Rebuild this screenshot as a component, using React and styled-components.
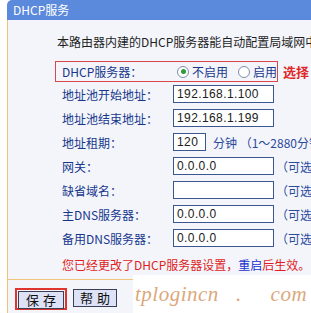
import React from 'react'
import styled, { createGlobalStyle } from 'styled-components'

const GlobalStyle = createGlobalStyle`
  body {
    margin: 0;
    background: #ffffff;
    font-family: "Noto Sans CJK SC", "Liberation Sans", sans-serif;
    font-size: 12px;
  }
`

const Page = styled.div`
  position: relative;
  width: 311px;
  height: 313px;
  overflow: hidden;
  background: #ffffff;
`

const Header = styled.div`
  margin-left: 7px;
  height: 20px;
  line-height: 20px;
  padding-left: 6px;
  background: #5b89dc;
  border-top-left-radius: 5px;
  color: #ffffff;
  font-size: 12px;
  white-space: nowrap;
`

const Panel = styled.div`
  margin-left: 7px;
  height: 293px;
  border-left: 1px solid #f0c47a;
  background: #f3f5fb;
  overflow: hidden;
`

const Intro = styled.div`
  margin-top: 14px;
  padding-left: 49px;
  line-height: 16px;
  color: #1e1e1e;
  white-space: nowrap;
`

const Form = styled.div`
  margin-left: 47px;
  margin-top: 11px;
`

const SwitchLine = styled.div`
  display: flex;
  align-items: center;
  white-space: nowrap;
`

const SwitchBox = styled.div`
  display: flex;
  align-items: center;
  width: 215px;
  height: 19px;
  padding-left: 6px;
  border: 1px solid #d9474a;
`

const Label = styled.div`
  width: 111px;
  flex: none;
  color: #17378c;
  white-space: nowrap;
`

const Radio = styled.div`
  display: flex;
  align-items: center;
  margin-left: ${(p) => p.$gap}px;
  color: #17378c;
`

const Circle = styled.span`
  position: relative;
  width: 10px;
  height: 10px;
  margin-right: 3px;
  border: 1px solid #7f8ca6;
  border-radius: 50%;
  background: #ffffff;

  &::after {
    content: '';
    display: ${(p) => (p.$on ? 'block' : 'none')};
    position: absolute;
    left: 2.5px;
    top: 2.5px;
    width: 5px;
    height: 5px;
    border-radius: 50%;
    background: #2f9a3a;
  }
`

const Hint = styled.span`
  margin-left: 5px;
  color: #e02828;
  font-size: 13px;
  font-weight: bold;
`

const FieldRow = styled.div`
  display: flex;
  align-items: center;
  height: 24px;
  padding-left: 7px;
  white-space: nowrap;
  &:first-of-type {
    margin-top: 3px;
  }
`

const Field = styled.div`
  box-sizing: border-box;
  width: ${(p) => p.$w}px;
  height: 18px;
  flex: none;
  padding-left: 3px;
  line-height: 16px;
  border: 1px solid #3c5690;
  background: #ffffff;
  color: #202020;
  font-family: "Liberation Sans", sans-serif;
  font-size: 12px;
  letter-spacing: 0.4px;
`

const Note = styled.span`
  margin-left: ${(p) => p.$gap}px;
  color: #2a4a9c;
`

const Message = styled.div`
  margin-top: 7px;
  padding-left: 7px;
  line-height: 16px;
  color: #e01e1e;
  white-space: nowrap;
`

const Link = styled.span`
  color: #1830d0;
`

const Divider = styled.div`
  margin-top: 6px;
  border-top: 1px solid #f0c47a;
`

const Buttons = styled.div`
  display: flex;
  align-items: flex-start;
  gap: 6px;
  padding: 8px 0 0 7px;
`

const Button = styled.div`
  box-sizing: border-box;
  width: ${(p) => (p.$focus ? 52 : 44)}px;
  height: ${(p) => (p.$focus ? 22 : 19)}px;
  margin-top: ${(p) => (p.$focus ? 0 : 1)}px;
  border: ${(p) => (p.$focus ? '2px solid #e0352c' : 'none')};
  padding: ${(p) => (p.$focus ? '1px' : '0')};
`

const Face = styled.div`
  box-sizing: border-box;
  height: 18px;
  line-height: 16px;
  text-align: center;
  border: 1px solid #3a3f55;
  background: #dde2f6;
  color: #101010;
  font-size: 13px;
  letter-spacing: 4px;
  text-indent: 4px;
`

const Watermark = styled.div`
  position: absolute;
  left: 133px;
  top: 275px;
  right: 0;
  bottom: 0;
  padding: 4px 0 0 2px;
  background: #ffffff;
  color: #dba87c;
  font-family: "Liberation Serif", serif;
  font-style: italic;
  font-size: 21px;
  letter-spacing: 0.5px;
  line-height: 30px;
  white-space: pre;
`

const rows = [
  { label: '地址池开始地址：', value: '192.168.1.100', w: 101 },
  { label: '地址池结束地址：', value: '192.168.1.199', w: 101 },
  { label: '地址租期：', value: '120', w: 33, note: '分钟 （1～2880分钟）', gap: 7 },
  { label: '网关：', value: '0.0.0.0', w: 101, note: '（可选）', gap: 2 },
  { label: '缺省域名：', value: '', w: 101, note: '（可选）', gap: 2 },
  { label: '主DNS服务器：', value: '0.0.0.0', w: 101, note: '（可选）', gap: 2 },
  { label: '备用DNS服务器：', value: '0.0.0.0', w: 101, note: '（可选）', gap: 2 }
]

const App = () => {
  return (
    <Page>
      <GlobalStyle />
      <Header>DHCP服务</Header>
      <Panel>
        <Intro>本路由器内建的DHCP服务器能自动配置局域网中各计算机的TCP/IP协议。</Intro>
        <Form>
          <SwitchLine>
            <SwitchBox>
              <Label>DHCP服务器：</Label>
              <Radio $gap={4}>
                <Circle $on />
                不启用
              </Radio>
              <Radio $gap={10}>
                <Circle />
                启用
              </Radio>
            </SwitchBox>
            <Hint>选择</Hint>
          </SwitchLine>
          {rows.map((row) => (
            <FieldRow key={row.label}>
              <Label>{row.label}</Label>
              <Field $w={row.w}>{row.value}</Field>
              {row.note && <Note $gap={row.gap}>{row.note}</Note>}
            </FieldRow>
          ))}
          <Message>
            您已经更改了DHCP服务器设置，<Link>重启</Link>后生效。
          </Message>
        </Form>
        <Divider />
        <Buttons>
          <Button $focus>
            <Face>保存</Face>
          </Button>
          <Button>
            <Face>帮助</Face>
          </Button>
        </Buttons>
      </Panel>
      <Watermark>{'tplogincn   .     com'}</Watermark>
    </Page>
  )
}

export default App
